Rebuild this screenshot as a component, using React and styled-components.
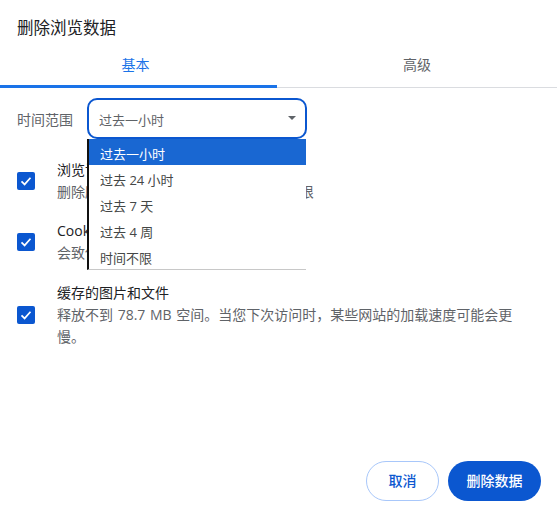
import React from 'react';
import styled, { createGlobalStyle } from 'styled-components';

const GlobalStyle = createGlobalStyle`
    html, body {
        margin: 0;
        padding: 0;
        background: #fff;
    }
    body {
        font-family: "Open Sans", "Noto Sans CJK SC", sans-serif;
    }
`;

const Dialog = styled.div`
    width: 557px;
    height: 515px;
    display: flex;
    flex-direction: column;
    overflow: hidden;
    box-sizing: border-box;
`;

const Title = styled.div`
    height: 44px;
    padding: 17px 0 0 17px;
    box-sizing: border-box;
    font-size: 16.5px;
    line-height: 21px;
    color: #202124;
`;

const Tabs = styled.div`
    display: flex;
    height: 44px;
    border-bottom: 1px solid #dadce0;
    box-sizing: border-box;
`;

const Tab = styled.div`
    width: ${(p) => (p.$active ? '277px' : '280px')};
    display: flex;
    align-items: center;
    justify-content: center;
    padding: ${(p) => (p.$active ? '0 6px 4px 0' : '0 0 4px')};
    box-sizing: border-box;
    font-size: 14px;
    color: ${(p) => (p.$active ? '#1a73e8' : '#5f6368')};
    box-shadow: ${(p) => (p.$active ? 'inset 0 -3px 0 #1a73e8' : 'none')};
    margin-bottom: -1px;
`;

const Body = styled.div`
    flex: 1;
    display: flex;
    flex-direction: column;
    padding: 10px 17px 0;
`;

const RangeRow = styled.div`
    display: flex;
    align-items: center;
    gap: 14px;
    font-size: 14px;
    color: #5f6368;
`;

const SelectWrap = styled.div`
    position: relative;
    width: 220px;
`;

const SelectBox = styled.div`
    height: 41px;
    box-sizing: border-box;
    border: 2px solid #0b57d0;
    border-radius: 10px;
    display: flex;
    align-items: center;
    justify-content: space-between;
    padding: 2px 9px 0 10px;
    font-size: 13px;
    color: #5f6368;
`;

const Caret = styled.span`
    width: 0;
    height: 0;
    border-left: 4px solid transparent;
    border-right: 4px solid transparent;
    border-top: 4px solid #5f6368;
    margin-bottom: 3px;
`;

const Menu = styled.ul`
    position: absolute;
    left: 0;
    top: 41px;
    width: 219px;
    box-sizing: border-box;
    margin: 0;
    padding: 0;
    list-style: none;
    background: #fff;
    border-left: 2px solid #111;
    border-bottom: 1px solid #c8c8c8;
    z-index: 2;
`;

const MenuItem = styled.li`
    height: 26px;
    display: flex;
    align-items: center;
    padding: 2px 0 0 11px;
    box-sizing: border-box;
    font-size: 13px;
    background: ${(p) => (p.$selected ? '#1967d2' : '#fff')};
    color: ${(p) => (p.$selected ? '#fff' : '#444746')};
`;

const Options = styled.div`
    display: flex;
    flex-direction: column;
    margin-top: 20px;
`;

const Option = styled.div`
    display: flex;
    align-items: center;
    gap: 22px;
    margin-bottom: ${(p) => p.$after}px;
`;

const Check = styled.span`
    flex: none;
    width: 18px;
    height: 18px;
    border-radius: 2px;
    background: #0b57d0;
    display: flex;
    align-items: center;
    justify-content: center;
`;

const OptionText = styled.div`
    max-width: 470px;
    font-size: 14px;
    line-height: 22px;
    word-spacing: 1px;
    color: #5f6368;
`;

const OptionTitle = styled.div`
    color: #202124;
    word-spacing: 0;
`;

const Footer = styled.div`
    display: flex;
    justify-content: flex-end;
    gap: 9px;
    padding: 0 16px 14px;
`;

const Button = styled.button`
    height: 40px;
    width: ${(p) => (p.$primary ? '93px' : '73px')};
    border-radius: 20px;
    box-sizing: border-box;
    border: ${(p) => (p.$primary ? 'none' : '1px solid #a8c7fa')};
    background: ${(p) => (p.$primary ? '#0b57d0' : '#fff')};
    color: ${(p) => (p.$primary ? '#fff' : '#0b57d0')};
    font-family: inherit;
    font-size: 14px;
    font-weight: 500;
    padding: 0 0 2px;
`;

const CheckIcon = () => (
    <svg width="14" height="14" viewBox="0 0 14 14" fill="none">
        <path d="M2.5 7.4 5.6 10.4 11.5 3.8" stroke="#fff" strokeWidth="1.7" />
    </svg>
);

const ranges = ['过去一小时', '过去 24 小时', '过去 7 天', '过去 4 周', '时间不限'];

const items = [
    {
        title: '浏览记录',
        desc: '删除所有已登录设备上的记录， 时间不限',
        after: 17,
    },
    {
        title: 'Cookie 及其他网站数据',
        desc: '会致使您从大多数网站退出。',
        after: 18,
    },
    {
        title: '缓存的图片和文件',
        desc: '释放不到 78.7 MB 空间。当您下次访问时，某些网站的加载速度可能会更慢。',
        after: 0,
    },
];

function App() {
    return (
        <Dialog>
            <GlobalStyle />
            <Title>删除浏览数据</Title>
            <Tabs>
                <Tab $active>基本</Tab>
                <Tab>高级</Tab>
            </Tabs>
            <Body>
                <RangeRow>
                    时间范围
                    <SelectWrap>
                        <SelectBox>
                            过去一小时
                            <Caret />
                        </SelectBox>
                        <Menu>
                            {ranges.map((range, i) => (
                                <MenuItem key={range} $selected={i === 0}>
                                    {range}
                                </MenuItem>
                            ))}
                        </Menu>
                    </SelectWrap>
                </RangeRow>
                <Options>
                    {items.map((item) => (
                        <Option key={item.title} $after={item.after}>
                            <Check>
                                <CheckIcon />
                            </Check>
                            <OptionText>
                                <OptionTitle>{item.title}</OptionTitle>
                                {item.desc}
                            </OptionText>
                        </Option>
                    ))}
                </Options>
            </Body>
            <Footer>
                <Button>取消</Button>
                <Button $primary>删除数据</Button>
            </Footer>
        </Dialog>
    );
}

export default App;
